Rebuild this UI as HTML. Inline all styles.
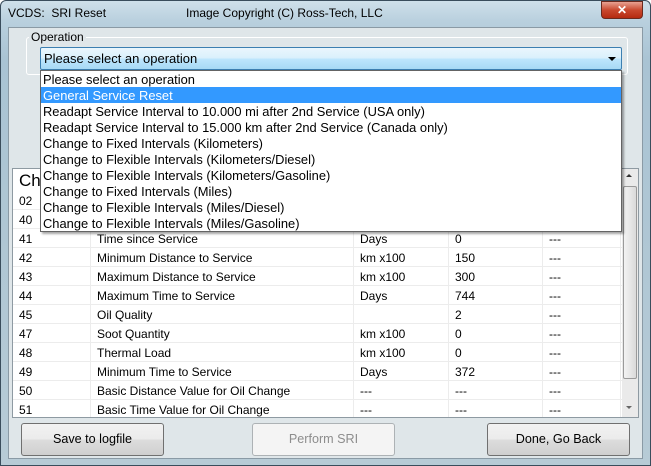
<!DOCTYPE html><html><head><style>
*{margin:0;padding:0;box-sizing:border-box}
body{width:651px;height:466px;overflow:hidden;font-family:"Liberation Sans",sans-serif;font-size:12px;background:#fff;position:relative}
.frame{position:absolute;left:0;top:0;width:651px;height:466px;border:1px solid #3a4d5c;border-radius:6px 6px 0 0;background:linear-gradient(180deg,#cfe0ea 0,#b9d0de 20px,#a9c3d3 60px,#b7cbd6 100%)}
.title{position:absolute;top:6px;font-size:12px;color:#000}
.close{position:absolute;left:601px;top:1px;width:42px;height:18px;border:1px solid #6b2a1e;border-radius:0 0 4px 4px;background:linear-gradient(#e8a292,#c9492f 50%,#b52a10);color:#fff;font-weight:bold;text-align:center;font-size:12px;line-height:16px}
.client{position:absolute;left:8px;top:27px;width:635px;height:432px;background:#dfe6e9;border:1px solid #8a9aa5}
.abs{position:absolute}
.group{left:26px;top:37px;width:602px;height:38px;border:1px solid #fff;border-radius:3px}
.glabel{left:29px;top:30px;background:#dfe6e9;padding:0 2px;font-size:12px}
.combo{left:40px;top:47px;width:582px;height:23px;border:1px solid #3c7fb1;border-radius:2px;background:linear-gradient(#eaf6fd,#d9f0fc 50%,#bee6fd 50%,#a7d9f5);font-size:13px;padding:3px 0 0 3px}
.list{left:40px;top:70px;width:582px;height:162px;background:#fff;border:1px solid #646464;box-shadow:2px 2px 2px rgba(0,0,0,.35)}
.list div{height:16px;line-height:17px;padding-left:2px;font-size:12.9px}
.sel{background:#3399ff;color:#fff}
.table{left:12px;top:168px;width:627px;height:250px;background:#fff;border:1px solid #8e9aa2;overflow:hidden}
.row{position:absolute;left:0;height:19px;width:609px;border-bottom:1px solid #ececec;font-size:12px;line-height:21px}
.row span{position:absolute;top:0;height:19px;border-right:1px solid #ececec;padding-left:6px}
.sb{left:622px;top:169px;width:16px;height:248px;background:#eaeaea}
.thumb{left:623px;top:186px;width:14px;height:193px;border:1px solid #9a9a9a;border-radius:2px;background:linear-gradient(90deg,#f3f3f3,#dadada)}
.btn{position:absolute;top:423px;height:33px;border:1px solid #707070;border-radius:3px;background:linear-gradient(#f2f2f2,#ebebeb 50%,#dddddd 50%,#cfcfcf);text-align:center;line-height:31px;font-size:12.6px}
</style></head><body>
<div class="frame"></div>
<div class="title" style="left:8px">VCDS:&nbsp; SRI Reset</div>
<div class="title" style="left:186px">Image Copyright (C) Ross-Tech, LLC</div>
<div class="close">✕</div>
<div class="client"></div>
<div class="abs group"></div>
<div class="abs glabel">Operation</div>
<div class="abs combo">Please select an operation<span style="position:absolute;right:5px;top:9px;width:0;height:0;border-left:4px solid transparent;border-right:4px solid transparent;border-top:4px solid #000"></span></div>
<div class="abs table">
<div style="position:absolute;left:6px;top:2px;font-size:17px">Ch</div>
<div class="row" style="top:22px"><span style="left:0;width:78px">02</span></div>
<div class="row" style="top:41px"><span style="left:0;width:78px">40</span></div>
<div class="row" style="top:60px"><span style="left:0;width:78px">41</span><span style="left:78px;width:263px">Time since Service</span><span style="left:341px;width:95px">Days</span><span style="left:436px;width:94px">0</span><span style="left:530px;width:78px">---</span></div>
<div class="row" style="top:79px"><span style="left:0;width:78px">42</span><span style="left:78px;width:263px">Minimum Distance to Service</span><span style="left:341px;width:95px">km x100</span><span style="left:436px;width:94px">150</span><span style="left:530px;width:78px">---</span></div>
<div class="row" style="top:98px"><span style="left:0;width:78px">43</span><span style="left:78px;width:263px">Maximum Distance to Service</span><span style="left:341px;width:95px">km x100</span><span style="left:436px;width:94px">300</span><span style="left:530px;width:78px">---</span></div>
<div class="row" style="top:117px"><span style="left:0;width:78px">44</span><span style="left:78px;width:263px">Maximum Time to Service</span><span style="left:341px;width:95px">Days</span><span style="left:436px;width:94px">744</span><span style="left:530px;width:78px">---</span></div>
<div class="row" style="top:136px"><span style="left:0;width:78px">45</span><span style="left:78px;width:263px">Oil Quality</span><span style="left:341px;width:95px">&nbsp;</span><span style="left:436px;width:94px">2</span><span style="left:530px;width:78px">---</span></div>
<div class="row" style="top:155px"><span style="left:0;width:78px">47</span><span style="left:78px;width:263px">Soot Quantity</span><span style="left:341px;width:95px">km x100</span><span style="left:436px;width:94px">0</span><span style="left:530px;width:78px">---</span></div>
<div class="row" style="top:174px"><span style="left:0;width:78px">48</span><span style="left:78px;width:263px">Thermal Load</span><span style="left:341px;width:95px">km x100</span><span style="left:436px;width:94px">0</span><span style="left:530px;width:78px">---</span></div>
<div class="row" style="top:193px"><span style="left:0;width:78px">49</span><span style="left:78px;width:263px">Minimum Time to Service</span><span style="left:341px;width:95px">Days</span><span style="left:436px;width:94px">372</span><span style="left:530px;width:78px">---</span></div>
<div class="row" style="top:212px"><span style="left:0;width:78px">50</span><span style="left:78px;width:263px">Basic Distance Value for Oil Change</span><span style="left:341px;width:95px">---</span><span style="left:436px;width:94px">---</span><span style="left:530px;width:78px">---</span></div>
<div class="row" style="top:231px"><span style="left:0;width:78px">51</span><span style="left:78px;width:263px">Basic Time Value for Oil Change</span><span style="left:341px;width:95px">---</span><span style="left:436px;width:94px">---</span><span style="left:530px;width:78px">---</span></div>
</div>
<div class="abs sb"></div>
<div class="abs thumb"></div>
<div class="abs" style="left:626px;top:174px;width:0;height:0;border-left:3px solid transparent;border-right:3px solid transparent;border-bottom:3px solid #333"></div>
<div class="abs" style="left:626px;top:406px;width:0;height:0;border-left:3px solid transparent;border-right:3px solid transparent;border-top:3px solid #666"></div>
<div class="abs list">
<div>Please select an operation</div>
<div class="sel">General Service Reset</div>
<div>Readapt Service Interval to 10.000 mi after 2nd Service (USA only)</div>
<div>Readapt Service Interval to 15.000 km after 2nd Service (Canada only)</div>
<div>Change to Fixed Intervals (Kilometers)</div>
<div>Change to Flexible Intervals (Kilometers/Diesel)</div>
<div>Change to Flexible Intervals (Kilometers/Gasoline)</div>
<div>Change to Fixed Intervals (Miles)</div>
<div>Change to Flexible Intervals (Miles/Diesel)</div>
<div>Change to Flexible Intervals (Miles/Gasoline)</div>
</div>
<div class="btn" style="left:21px;width:143px">Save to logfile</div>
<div class="btn" style="left:252px;width:143px;background:#f4f4f4;border-color:#adb2b5;color:#8d8d8d">Perform SRI</div>
<div class="btn" style="left:487px;width:143px">Done, Go Back</div>
</body></html>
